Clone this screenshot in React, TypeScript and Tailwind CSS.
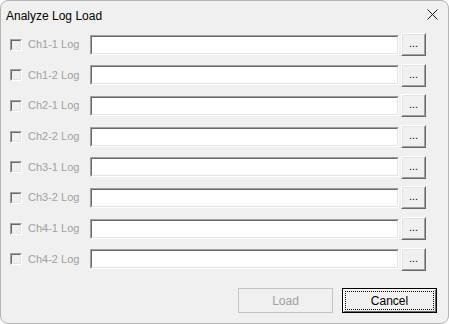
import React from "react";

const channels = ["Ch1-1", "Ch1-2", "Ch2-1", "Ch2-2", "Ch3-1", "Ch3-2", "Ch4-1", "Ch4-2"];

function LogRow({ name }: { name: string }) {
  return (
    <div className="flex h-[23px] items-center">
      {/* disabled checkbox */}
      <div className="ml-[9px] h-[12px] w-[12px] border border-t-[#a0a0a0] border-l-[#a0a0a0] border-b-white border-r-white">
        <div className="h-full w-full border border-t-[#696969] border-l-[#696969] border-b-[#e3e3e3] border-r-[#e3e3e3] bg-[#f0f0f0]" />
      </div>
      <span className="ml-[6px] w-[62px] text-[11px] leading-none text-[#a0a0a0]">{name} Log</span>
      {/* sunken text box */}
      <div className="h-[20px] w-[309px] border border-t-[#a0a0a0] border-l-[#a0a0a0] border-b-white border-r-white">
        <div className="h-full w-full border border-t-[#696969] border-l-[#696969] border-b-[#e3e3e3] border-r-[#e3e3e3] bg-white" />
      </div>
      {/* raised browse button */}
      <div className="ml-[2px] h-[23px] w-[25px] border border-t-white border-l-white border-b-[#696969] border-r-[#696969]">
        <div className="flex h-full w-full items-center justify-center border border-t-[#e3e3e3] border-l-[#e3e3e3] border-b-[#a0a0a0] border-r-[#a0a0a0] bg-[#f0f0f0] pb-[2px] text-[11px] leading-none text-black">
          ...
        </div>
      </div>
    </div>
  );
}

export default function App() {
  return (
    <div
      className="flex h-[324px] w-[449px] flex-col overflow-hidden rounded-[8px] border border-[#b4b4b4] bg-[#f0f0f0]"
      style={{ fontFamily: '"Liberation Sans", Arial, sans-serif' }}
    >
      {/* title bar */}
      <div className="flex h-[32px] shrink-0 items-start justify-between">
        <span className="ml-[5px] mt-[6px] text-[12px] text-black">Analyze Log Load</span>
        <svg className="mr-[10px] mt-[8px]" width="11" height="11" viewBox="0 0 11 11">
          <path d="M0.5 0.5 L10.5 10.5 M10.5 0.5 L0.5 10.5" stroke="#1a1a1a" strokeWidth="1" fill="none" />
        </svg>
      </div>

      <div className="flex flex-col gap-[7.7px]">
        {channels.map((c) => (
          <LogRow key={c} name={c} />
        ))}
      </div>

      {/* footer buttons */}
      <div className="mt-auto mb-[10px] flex justify-end gap-[9px] pr-[11px]">
        <div className="flex h-[25px] w-[95px] items-center justify-center border border-[#c4c4c4] bg-[#f0f0f0] text-[12px] text-[#a0a0a0]">
          Load
        </div>
        <div className="h-[25px] w-[95px] border border-black">
          <div className="h-full w-full border border-t-white border-l-white border-b-[#696969] border-r-[#696969] bg-[#f0f0f0] p-[1px]">
            <div className="flex h-full w-full items-center justify-center border border-dotted border-black text-[12px] text-black">
              Cancel
            </div>
          </div>
        </div>
      </div>
    </div>
  );
}
